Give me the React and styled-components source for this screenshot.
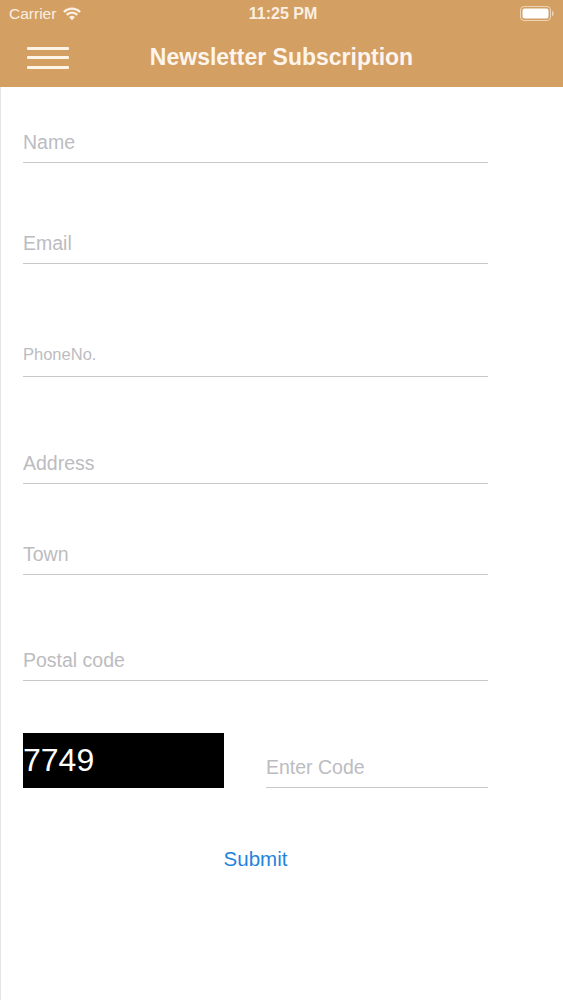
import React from 'react'
import styled, { createGlobalStyle } from 'styled-components'

const GlobalStyle = createGlobalStyle`
  * { box-sizing: border-box; }
  body {
    margin: 0;
    background: #ffffff;
    font-family: "Liberation Sans", Arial, sans-serif;
  }
`;

const fields = [
  { name: 'name', placeholder: 'Name', mt: 44 },
  { name: 'email', placeholder: 'Email', mt: 69 },
  { name: 'phone', placeholder: 'PhoneNo.', mt: 79, size: 16.5, pb: 11 },
  { name: 'address', placeholder: 'Address', mt: 75 },
  { name: 'town', placeholder: 'Town', mt: 59 },
  { name: 'postal', placeholder: 'Postal code', mt: 74 },
];

function WifiIcon() {
  return (
    <svg width="18" height="14" viewBox="0 0 18 14" fill="none">
      <path d="M9 13.2 L6.1 10.3 A4.1 4.1 0 0 1 11.9 10.3 Z" fill="currentColor" />
      <path d="M3.7 7.9 A7.5 7.5 0 0 1 14.3 7.9" stroke="currentColor" strokeWidth="2.3" />
      <path d="M0.9 5 A11.5 11.5 0 0 1 17.1 5" stroke="currentColor" strokeWidth="2.3" />
    </svg>
  )
}

function BatteryIcon() {
  return (
    <svg width="34" height="15" viewBox="0 0 34 15" fill="none">
      <rect x="0.5" y="0.5" width="30" height="14" rx="3.5" stroke="rgba(255,255,255,0.55)" />
      <rect x="2.5" y="2.5" width="26" height="10" rx="2" fill="#ffffff" />
      <path d="M32 5 a1.5 1.5 0 0 1 1.5 1.5 v2 a1.5 1.5 0 0 1 -1.5 1.5 Z" fill="rgba(255,255,255,0.55)" />
    </svg>
  )
}

function App() {
  return (
    <Screen>
      <GlobalStyle />
      <Header>
        <StatusBar>
          <Carrier>
            Carrier
            <WifiIcon />
          </Carrier>
          <Clock>11:25 PM</Clock>
          <Battery>
            <BatteryIcon />
          </Battery>
        </StatusBar>
        <NavBar>
          <MenuButton aria-label="menu">
            <span /><span /><span />
          </MenuButton>
          <Title>Newsletter Subscription</Title>
          <div />
        </NavBar>
      </Header>

      <Body>
        <Form onSubmit={(e) => e.preventDefault()}>
          {fields.map((f) => (
            <Field
              key={f.name}
              name={f.name}
              placeholder={f.placeholder}
              $mt={f.mt}
              $size={f.size}
              $pb={f.pb}
            />
          ))}

          <CaptchaRow>
            <CaptchaBox>7749</CaptchaBox>
            <CodeField placeholder="Enter Code" />
          </CaptchaRow>

          <SubmitButton type="submit">Submit</SubmitButton>
        </Form>
      </Body>
    </Screen>
  )
}

const Screen = styled.div`
  width: 563px;
  min-height: 1000px;
  display: flex;
  flex-direction: column;
  background: #fff;
`;

const Header = styled.header`
  height: 87px;
  background: #d49f63;
  display: flex;
  flex-direction: column;
  color: #fcf2e6;
`;

const StatusBar = styled.div`
  height: 28px;
  padding: 0 9px;
  display: grid;
  grid-template-columns: 1fr auto 1fr;
  align-items: center;
`;

const Carrier = styled.div`
  display: flex;
  align-items: center;
  gap: 7px;
  font-size: 15.5px;
  color: #fbefe2;
  svg { margin-top: -1px; }
`;

const Clock = styled.div`
  font-size: 16px;
  font-weight: 700;
  color: #fbefe2;
  padding-left: 3px;
`;

const Battery = styled.div`
  justify-self: end;
  display: flex;
  align-items: center;
  margin-top: -1px;
`;

const NavBar = styled.div`
  height: 59px;
  display: grid;
  grid-template-columns: 1fr auto 1fr;
  align-items: center;
`;

const MenuButton = styled.button`
  justify-self: start;
  margin-left: 27px;
  padding: 0;
  border: none;
  background: none;
  display: flex;
  flex-direction: column;
  gap: 6.5px;
  cursor: pointer;
  span {
    display: block;
    width: 42px;
    height: 3px;
    border-radius: 1px;
    background: #fdf3e7;
  }
`;

const Title = styled.h1`
  margin: 0;
  font-size: 23px;
  font-weight: 700;
  color: #fdf5ec;
  margin-top: -1px;
`;

const Body = styled.main`
  flex: 1;
  border-left: 1px solid #e4e4e4;
`;

const Form = styled.form`
  width: 487px;
  padding-left: 22px;
  display: flex;
  flex-direction: column;
`;

const inputBase = `
  display: block;
  border: none;
  border-bottom: 1px solid #c9c9c9;
  border-radius: 0;
  outline: none;
  background: transparent;
  font-family: "Liberation Sans", Arial, sans-serif;
  color: #333;
  line-height: 22px;
  box-sizing: content-box;
  height: 22px;
  &::placeholder { color: #bcbcc0; }
`;

const Field = styled.input`
  ${inputBase}
  width: 100%;
  margin-top: ${(p) => p.$mt}px;
  font-size: ${(p) => p.$size || 19.5}px;
  padding: 0 0 ${(p) => p.$pb || 9}px;
`;

const CaptchaRow = styled.div`
  margin-top: 52px;
  display: flex;
  justify-content: space-between;
  align-items: flex-end;
`;

const CaptchaBox = styled.div`
  width: 201px;
  height: 55px;
  background: #000;
  color: #fff;
  font-size: 32px;
  display: flex;
  align-items: center;
  padding-left: 0;
`;

const CodeField = styled.input`
  ${inputBase}
  width: 222px;
  font-size: 19.5px;
  padding: 0 0 9px;
`;

const SubmitButton = styled.button`
  align-self: center;
  margin-top: 60px;
  padding: 0;
  border: none;
  background: none;
  color: #1f84dc;
  font-family: "Liberation Sans", Arial, sans-serif;
  font-size: 20.5px;
  line-height: 22px;
  cursor: pointer;
`;

export default App
